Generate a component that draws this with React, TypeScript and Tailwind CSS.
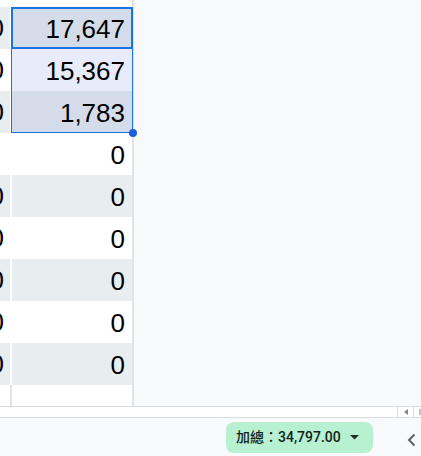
import React from 'react';

type Band = 'gray' | 'white';

interface RowData {
  band: Band;
  left: string;
  right: string;
  selected?: boolean;
}

const rows: RowData[] = [
  { band: 'gray', left: '0', right: '17,647', selected: true },
  { band: 'white', left: '0', right: '15,367', selected: true },
  { band: 'gray', left: '0', right: '1,783', selected: true },
  { band: 'white', left: '', right: '0' },
  { band: 'gray', left: '0', right: '0' },
  { band: 'white', left: '0', right: '0' },
  { band: 'gray', left: '0', right: '0' },
  { band: 'white', left: '0', right: '0' },
  { band: 'gray', left: '0', right: '0' },
];

const cellBg = (band: Band, selected?: boolean) => {
  if (selected) return band === 'gray' ? 'bg-[#d4dcea]' : 'bg-[#e8ebfa]';
  return band === 'gray' ? 'bg-[#e8edf0]' : 'bg-white';
};

const Row: React.FC<{ row: RowData }> = ({ row }) => (
  <div className="flex h-[42px]">
    {/* clipped column to the left */}
    <div
      className={`w-[10px] flex justify-end overflow-hidden pr-[6px] ${cellBg(row.band)}`}
    >
      <span className="whitespace-nowrap leading-[42px] text-[26px] text-black">
        {row.left}
      </span>
    </div>
    <div className="w-[2px] bg-white" />
    <div
      className={`flex-1 flex justify-end pr-[7px] ${cellBg(row.band, row.selected)}`}
    >
      <span className="whitespace-nowrap leading-[42px] pt-[1px] text-[26px] text-black">
        {row.right}
      </span>
    </div>
  </div>
);

export default function App() {
  const selected = rows.filter((r) => r.selected);
  const rest = rows.filter((r) => !r.selected);

  return (
    <div className="w-[421px] h-[456px] overflow-hidden bg-[#f8f9fa] flex flex-col font-['Liberation_Sans',Arial,sans-serif]">
      {/* Grid area */}
      <div className="flex h-[406px]">
        <div className="w-[134px] bg-white border-r-2 border-[#e3e3e3] pt-[7px] flex flex-col">
          {/* Selected range */}
          <div className="relative">
            {selected.map((r, i) => (
              <Row key={i} row={r} />
            ))}
            <div className="absolute left-[11px] top-0 w-[122px] h-full border border-[#1a73e8] pointer-events-none" />
            <div className="absolute left-[11px] top-0 w-[122px] h-[42px] border-2 border-[#1a73e8] pointer-events-none" />
            <div className="absolute right-[-5px] bottom-[-4px] w-[8px] h-[8px] rounded-full bg-[#1a5fe0]" />
          </div>
          {rest.map((r, i) => (
            <Row key={i} row={r} />
          ))}
          {/* empty row below */}
          <div className="flex flex-1">
            <div className="w-[10px]" />
            <div className="w-[2px] bg-[#e3e3e3]" />
            <div className="flex-1" />
          </div>
        </div>
        <div className="flex-1" />
      </div>

      {/* Horizontal scrollbar */}
      <div className="h-[12px] bg-white border-y border-[#dadce0] flex justify-end">
        <div className="w-[16px] ml-auto border-l border-[#dadce0] flex items-center justify-center">
          <svg width="4" height="6" viewBox="0 0 4 6">
            <path d="M4 0 L0 3 L4 6 Z" fill="#80868b" />
          </svg>
        </div>
        <div className="w-[8px] border-l border-[#dadce0] flex items-center pl-[5px]">
          <div className="w-[2px] h-[6px] bg-[#bdc1c6]" />
        </div>
      </div>

      {/* Bottom bar */}
      <div className="flex-1 flex items-start pt-[4px] bg-[#f8f9fa]">
        <div className="ml-[226px] h-[31px] w-[147px] rounded-[8px] bg-[#b7f1d1] flex items-center pl-[10px] pr-[14px]">
          <span className="text-[14px] font-medium text-[#0f2419] whitespace-nowrap font-['Roboto','Noto_Sans_CJK_TC',sans-serif]">
            加總：34,797.00
          </span>
          <svg className="ml-auto" width="9" height="5" viewBox="0 0 9 5">
            <path d="M0 0 L9 0 L4.5 4.5 Z" fill="#1f2a24" />
          </svg>
        </div>
        <div className="ml-[34px] mt-[11px]">
          <svg width="9" height="14" viewBox="0 0 9 14">
            <path d="M7.5 1.5 L2 7 L7.5 12.5" fill="none" stroke="#5f6368" strokeWidth="2" />
          </svg>
        </div>
      </div>
    </div>
  );
}
